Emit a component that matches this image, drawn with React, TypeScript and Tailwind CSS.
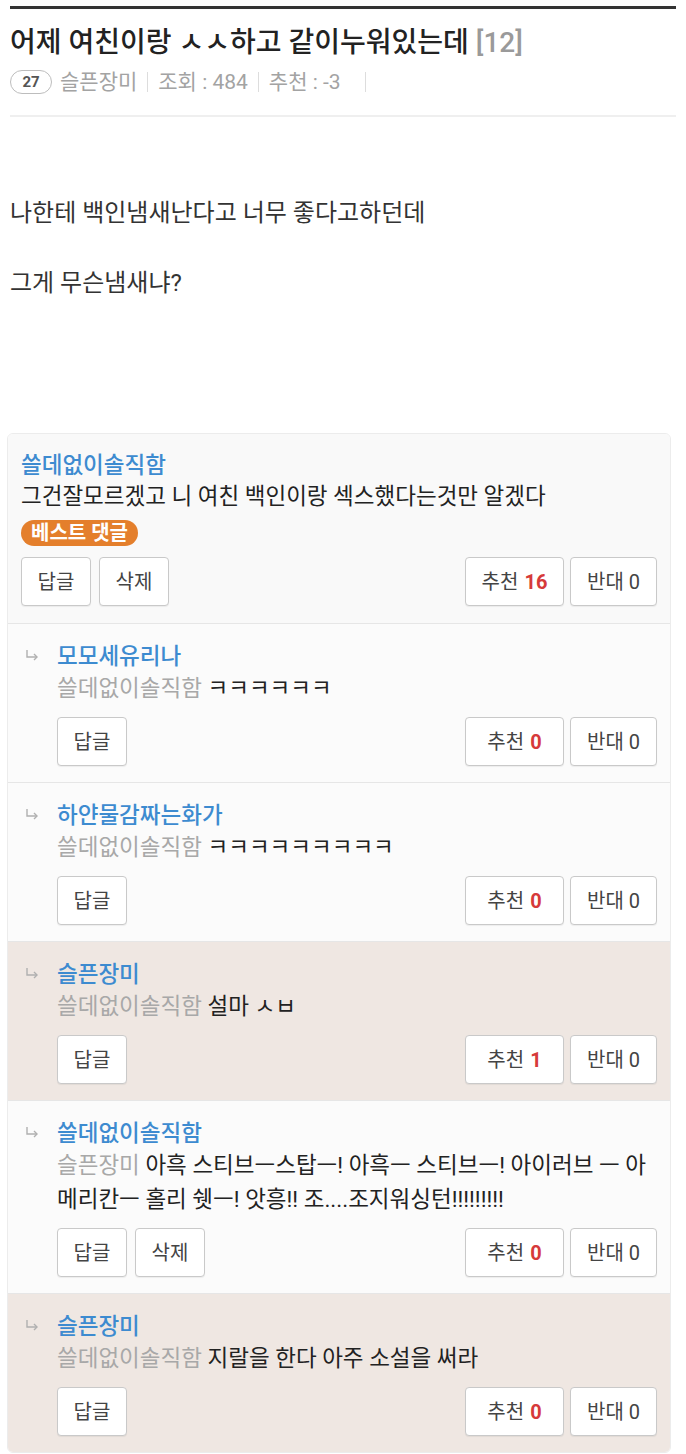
import React from "react";

const font = "font-['Roboto','Noto_Sans_CJK_KR',sans-serif]";

const btn =
  "flex h-[49px] items-center justify-center rounded-[4px] border border-[#c9c9c9] bg-white text-[20px] text-[#444] shadow-[0_1px_1px_rgba(0,0,0,0.06)]";

type Reply = {
  name: string;
  to: string;
  text: string;
  up: number;
  pink?: boolean;
  del?: boolean;
};

const replies: Reply[] = [
  { name: "모모세유리나", to: "쓸데없이솔직함", text: "ㅋㅋㅋㅋㅋㅋ", up: 0 },
  { name: "하얀물감짜는화가", to: "쓸데없이솔직함", text: "ㅋㅋㅋㅋㅋㅋㅋㅋㅋ", up: 0 },
  { name: "슬픈장미", to: "쓸데없이솔직함", text: "설마 ㅅㅂ", up: 1, pink: true },
  {
    name: "쓸데없이솔직함",
    to: "슬픈장미",
    text: "아흑 스티브ㅡ스탑ㅡ! 아흑ㅡ 스티브ㅡ! 아이러브 ㅡ 아메리칸ㅡ 홀리 쉣ㅡ! 앗흥!! 조....조지워싱턴!!!!!!!!!",
    up: 0,
    del: true,
  },
  { name: "슬픈장미", to: "쓸데없이솔직함", text: "지랄을 한다 아주 소설을 써라", up: 0, pink: true },
];

function Buttons({ up, del }: { up: number; del?: boolean }) {
  return (
    <div className="flex items-center justify-between">
      <div className="flex gap-2">
        <button className={`${btn} w-[70px]`}>답글</button>
        {del && <button className={`${btn} w-[70px]`}>삭제</button>}
      </div>
      <div className="flex gap-[6px]">
        <button className={`${btn} w-[99px] gap-[6px]`}>
          추천 <span className="font-bold text-[#d63a3a]">{up}</span>
        </button>
        <button className={`${btn} w-[87px]`}>반대 0</button>
      </div>
    </div>
  );
}

function ReplyArrow() {
  return (
    <svg width="14" height="12" viewBox="0 0 14 12" fill="none" className="mt-[8px]">
      <path d="M2 1V8H12" stroke="#b0b0b0" strokeWidth="1.4" />
      <path d="M9 5L12 8L9 11" stroke="#b0b0b0" strokeWidth="1.4" />
    </svg>
  );
}

export default function App() {
  return (
    <div className={`${font} min-h-[1454px] bg-white px-[10px] pt-[6px] text-[#222]`}>
      <div className="h-[3px] bg-[#333]" />

      <h1 className="mt-[17px] text-[28px] font-medium leading-[34px]">
        어제 여친이랑 ㅅㅅ하고 같이누워있는데{" "}
        <span className="text-[#9a9a9a]">[12]</span>
      </h1>

      <div className="mt-[8px] flex items-center text-[21px] leading-[28px] text-[#a3a3a3]">
        <span className="mr-[8px] flex h-[24px] w-[42px] items-center justify-center rounded-full border border-[#bdbdbd] text-[15px] font-bold text-[#555]">
          27
        </span>
        <span>슬픈장미</span>
        <span className="mx-[10px] h-[20px] w-px bg-[#ddd]" />
        <span>조회 : 484</span>
        <span className="mx-[10px] h-[20px] w-px bg-[#ddd]" />
        <span>추천 : -3</span>
        <span className="ml-[24px] h-[20px] w-px bg-[#ddd]" />
      </div>

      <div className="mt-[19px] h-[2px] bg-[#efefef]" />

      <div className="mt-[81px] text-[24px] leading-[30px] text-[#333]">
        <p>나한테 백인냄새난다고 너무 좋다고하던데</p>
        <p className="mt-[40px]">그게 무슨냄새냐?</p>
      </div>

      <div className="-ml-[3px] mr-[5px] mt-[135px] overflow-hidden rounded-[6px] border border-[#ececec]">
        <div className="border-b border-[#e6e6e6] bg-[#f9f9f9] px-[13px] pb-[17px] pt-[16px]">
          <div className="text-[22.5px] font-medium leading-[30px] text-[#3d8bd0]">
            쓸데없이솔직함
          </div>
          <div className="text-[22.5px] leading-[33px] text-[#222]">
            그건잘모르겠고 니 여친 백인이랑 섹스했다는것만 알겠다
          </div>
          <div className="mt-[7px] inline-flex h-[26px] items-center rounded-full bg-[#e47f2c] px-[10px] text-[20px] font-bold text-white">
            베스트 댓글
          </div>
          <div className="mt-[10px]">
            <Buttons up={16} del />
          </div>
        </div>

        {replies.map((r, i) => (
          <div
            key={i}
            className={`flex border-b border-[#e6e6e6] pb-[16px] pl-[17px] pr-[13px] pt-[17px] last:border-b-0 ${
              r.pink ? "bg-[#efe7e2]" : "bg-[#fbfbfb]"
            }`}
          >
            <div className="w-[32px] shrink-0">
              <ReplyArrow />
            </div>
            <div className="min-w-0 flex-1">
              <div className="text-[22.5px] font-medium leading-[30px] text-[#3d8bd0]">{r.name}</div>
              <div className="break-all text-[22.5px] leading-[34px] text-[#222]">
                <span className="text-[#a8a8a8]">{r.to}</span> {r.text}
              </div>
              <div className="mt-[12px]">
                <Buttons up={r.up} del={r.del} />
              </div>
            </div>
          </div>
        ))}
      </div>
    </div>
  );
}
